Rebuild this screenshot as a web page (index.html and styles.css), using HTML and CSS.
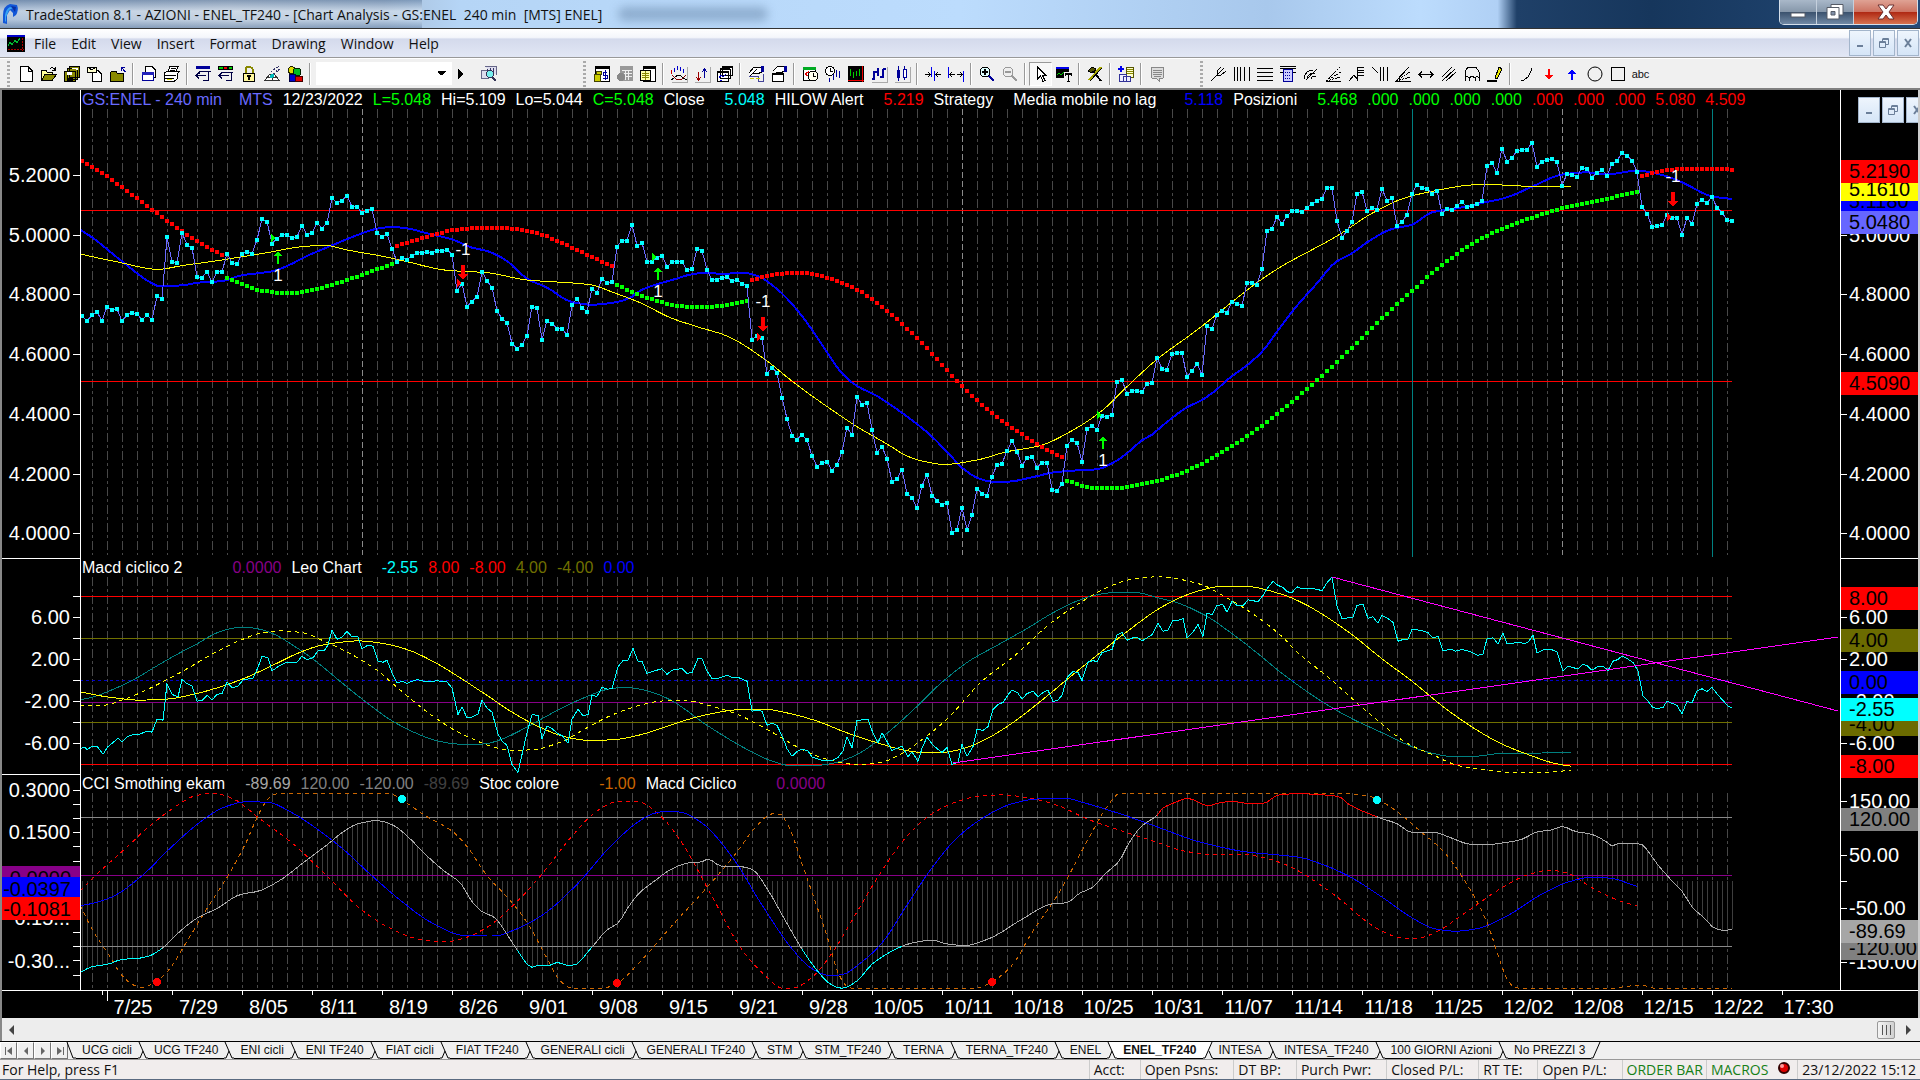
FILE: index.html
```html
<!DOCTYPE html>
<html lang="en">
	<head>
		<meta charset="UTF-8">
		<title>TradeStation 8.1 - AZIONI - ENEL_TF240</title>
		<link rel="stylesheet" href="styles.css">
	</head>
	<body>
		<header class="titlebar">
			<svg class="logo" viewBox="0 0 18 22"><path d="M2 20V12Q2 3 9 1L16 2Q18 7 15 12L12 14V10L9 7L6 12V21Z" fill="#1257d8"/><path d="M4 18V12Q5 6 9 4L12 5L8 7L5 14V19Z" fill="#37a5f5"/><path d="M10 3L15 4L14 9Z" fill="#0a2fa0"/></svg>
			<h1 class="title">TradeStation 8.1 - AZIONI - ENEL_TF240 - [Chart Analysis - GS:ENEL&nbsp; 240 min&nbsp; [MTS] ENEL]</h1>
			<span class="ghost"></span>
			<div class="win_buttons">
				<button class="win" aria-label="Minimize"><svg width="16" height="14"><rect x="1" y="8" width="14" height="4" fill="#fff" stroke="#555b66"/></svg></button>
				<button class="win" aria-label="Restore"><svg width="18" height="18"><path d="M5 1.5H17V12H5Z" fill="#fff" stroke="#555b66"/><path d="M1 4.5H13V16H1Z" fill="#fff" stroke="#555b66"/><path d="M5 8.5H9V12H5Z" fill="#8090a8" stroke="#555b66"/></svg></button>
				<button class="win win--close" aria-label="Close"><svg width="18" height="16"><path d="M1 1H6L9 5L12 1H17L12 8L17 15H12L9 11L6 15H1L6 8Z" fill="#fff" stroke="#6a3030"/></svg></button>
			</div>
		</header>

		<nav class="menubar">
			<svg class="menu_icon" viewBox="0 0 18 17"><path d="M0 0H18V17H0Z" fill="#000"/><path d="M0 0H18V2H0Z" fill="#00c"/><path d="M1 11L3 7L5 10L8 5L10 8L13 3" fill="none" stroke="#0b3"/><path d="M1 14H17M15 3V16" stroke="#a00" stroke-dasharray="2 1"/></svg>
			<a href="#">File</a><a href="#">Edit</a><a href="#">View</a><a href="#">Insert</a><a href="#">Format</a><a href="#">Drawing</a><a href="#">Window</a><a href="#">Help</a>
			<div class="mdi">
				<button aria-label="Minimize chart"><svg viewBox="0 0 10 10"><path d="M2 7H8V9H2Z" fill="#6b7f99"/></svg></button>
				<button aria-label="Restore chart"><svg viewBox="0 0 10 10"><path d="M3.5 .5H9.5V6.5H7M3.5 1.5H9.5M3.5 1V3M.5 3.5H6.5V9.5H.5ZM.5 4.5H6.5" fill="none" stroke="#6b7f99"/></svg></button>
				<button aria-label="Close chart"><svg viewBox="0 0 10 10"><path d="M2 1L8 9M8 1L2 9" stroke="#6b7f99" stroke-width="2"/></svg></button>
			</div>
		</nav>

		<div class="toolbar">
			<div class="tools">
				<span class="grip"></span>
				<button aria-label="New"><svg><path d="M2.5 .5H10L14.5 5V15.5H2.5ZM10 .5V5H14.5" fill="#fff" stroke="#000"/></svg></button>
				<button aria-label="Open"><svg><path d="M.5 14.5V4.5H5L6 6H11V8" fill="#ff9" stroke="#000"/><path d="M.5 14.5L4 8.5H15.5L11 14.5Z" fill="#8a8a00" stroke="#000"/><path d="M9 3Q12 0 14 4M14.5 1V4.5H11" fill="none" stroke="#000"/></svg></button>
				<button aria-label="Save all"><svg><path d="M5.5 .5H15.5V11H5.5ZM3 2.5H13V13H3ZM.5 5.5H11V15.5H.5Z" fill="#8a8a00" stroke="#000"/><path d="M3 6H8V9H3ZM6 2H14V4" fill="#fff"/><path d="M3 12H9V15H3Z" fill="#000"/></svg></button>
				<button aria-label="Import"><svg><path d="M5.5 4.5H11L14.5 8V15.5H5.5Z" fill="#fff" stroke="#000"/><path d="M.5 1H9V6.5H.5ZM.5 1L5 4L9 1" fill="#ffc" stroke="#000"/></svg></button>
				<button aria-label="Workspace"><svg><path d="M.5 15.5V6.5L2 5H6L7 7H13.5V15.5Z" fill="#8a8a00" stroke="#000"/><path d="M15.5 6L11 1M11 5V1H15" fill="none" stroke="#009"/></svg></button>
				<span class="sep"></span>
				<button aria-label="Preview"><svg><path d="M4.5 .5H11L14.5 4V11H4.5Z" fill="#fff" stroke="#000"/><path d="M1.5 6.5H12.5V14.5H1.5Z" fill="#fff" stroke="#009"/><path d="M1 6H13V9H1Z" fill="#22b"/></svg></button>
				<button aria-label="Print"><svg><path d="M4 6L6 .5H14L12 6M.5 7L3 5.5H15L13 8.5V13L10 15.5H.5Z" fill="#fff" stroke="#000"/><path d="M1 9.5H12M1 12.5H10M7 2.5H12M6 4.5H11" stroke="#000"/><path d="M3 13H8V14H3Z" fill="#dd0"/></svg></button>
				<span class="sep"></span>
				<button aria-label="Insert bar"><svg><path d="M1 0H15V3H1Z" fill="#009"/><path d="M4.5 5.5H15.5M8 14.5H13.5V6M4.5 5V8M1 9.5H11M4 6.5L1 9.5L4 12.5" fill="none" stroke="#004"/></svg></button>
				<button aria-label="Insert study"><svg><path d="M0 0H15V4H0Z" fill="#000"/><path d="M1 1H5V3H1Z" fill="#0c0"/><path d="M6 1H9V3H6Z" fill="#e00"/><path d="M11 1H14V3H11Z" fill="#0c0"/><path d="M8 14.5H13.5V6M4 6.5H15M1 9.5H11M4 6.5L1 9.5L4 12.5" fill="none" stroke="#004"/></svg></button>
				<button aria-label="Lock"><svg><path d="M4.5 8V3Q8 -2 11.5 3V8" fill="none" stroke="#880" stroke-width="2"/><path d="M2.5 7.5H13.5V15.5H2.5Z" fill="#fff79c" stroke="#000"/><path d="M6 9H10V11H9V14H7V11H6Z" fill="#000"/></svg></button>
				<button aria-label="Satellite"><svg><path d="M1 14L6 8L10 8L15 14ZM8 8V14M4 11H12" fill="#fff" stroke="#333"/><path d="M7 6L15 0M9 8L16 3M10 2L14 6" stroke="#336" stroke-dasharray="2 1"/><circle cx="8" cy="10" r="2" fill="#0bb"/></svg></button>
				<button aria-label="Shapes"><svg><path d="M1 3L4 0L8 2V6L4 8L1 6Z" fill="#dd0" stroke="#220"/><circle cx="10" cy="6" r="4" fill="#0b2" stroke="#020"/><path d="M2 8H8V15H2Z" fill="#00c" stroke="#004"/><path d="M8 10H15V15H8Z" fill="#d00" stroke="#400"/></svg></button>
				<span class="sep"></span>
				<select class="symbol" aria-label="Symbol"><option></option></select>
				<button class="go" aria-label="Go"><svg><path d="M5 3L10 8L5 13Z"/></svg></button>
				<button aria-label="Find symbol"><svg><path d="M3.5 .5H15.5V9M.5 4.5H7V12.5H.5Z" fill="#dde" stroke="#668"/><path d="M6 3V8M9 2V4M12 2V6" stroke="#336"/><circle cx="9" cy="8" r="3.5" fill="#7ee" stroke="#335"/><path d="M11 11L15 15" stroke="#335" stroke-width="2"/></svg></button>
			</div>

			<div class="tools">
				<span class="grip"></span>
				<button aria-label="Quotes"><svg><path d="M1.5 1.5H15.5V15.5H1.5Z" fill="#fff" stroke="#000"/><path d="M1 0H16V3H1Z" fill="#000"/><path d="M0 8H6V15H0ZM2 5H7V8H2Z" fill="#cc0" stroke="#440"/><path d="M13 6H9V9H13V12H9M11 4V14" fill="none" stroke="#009"/></svg></button>
				<button aria-label="Table" disabled><svg><path d="M3 0H16V15H6V8H3Z" fill="#999"/><path d="M5 4.5H15M7 7.5H15M8 10.5H15M8.5 4V14M11.5 4V14" stroke="#eee"/><circle cx="4" cy="11" r="4" fill="#888"/></svg></button>
				<button aria-label="Radar"><svg><path d="M3.5 1.5H15.5V15.5H3.5Z" fill="#fff" stroke="#000"/><path d="M3 0H16V3H3Z" fill="#000"/><path d="M.5 4.5H10V14.5H.5Z" fill="#ffa" stroke="#000"/><path d="M2 7.5H9M2 9.5H9M2 11.5H9M5.5 5V14" stroke="#880"/></svg></button>
				<span class="sep"></span>
				<button aria-label="Indicator"><svg class="raised"><path d="M.5 8V4" stroke="#c00"/><path d="M3.5 6V2M6.5 4V0M9.5 5V1M12.5 7V3" stroke="#00c"/><path d="M0 14L3 12L7 9H9L12 12L16 14" fill="none" stroke="#000"/><path d="M1 9L5 13H11L15 9" fill="none" stroke="#800"/></svg></button>
				<button aria-label="Show me"><svg class="raised"><path d="M4.5 6V13M2 11L4.5 14L7 11" fill="none" stroke="#900"/><path d="M10.5 12V3M8 6L10.5 3L13 6" fill="none" stroke="#009"/></svg></button>
				<button aria-label="Windows"><svg><path d="M5.5 .5H15.5V9H5.5ZM3 3H13V12H3ZM.5 5.5H11V15.5H.5Z" fill="#fff" stroke="#000"/><path d="M5 1H16M3 3H13M1 6H11" stroke="#000" stroke-width="2"/><path d="M2 12L4 9L6 11L9 8M3 14H5" fill="none" stroke="#00c"/></svg></button>
				<span class="sep"></span>
				<button aria-label="Format"><svg><path d="M1 7L6 1H13L14 6L9 8L5 7L2 10M4 8L9 3" fill="#fff" stroke="#000"/><path d="M13 0H16V6H13Z" fill="#009"/><path d="M1 10H10V15H15V8" fill="none" stroke="#449"/><path d="M2 12H6V13H2ZM8 12H12V13H8Z" fill="#cc0"/></svg></button>
				<button aria-label="Format window"><svg><path d="M1.5 7.5H12V15.5H1.5Z" fill="#fff" stroke="#000"/><path d="M1 7H12V9H1Z"/><path d="M2 5L7 0H13L14 5L9 7L5 6" fill="#fff" stroke="#000"/><path d="M13 0H16V6H13Z" fill="#009"/></svg></button>
				<span class="sep"></span>
				<button aria-label="Calendar"><svg><path d="M1 3H13V14H1Z" fill="#fff" stroke="#000"/><path d="M1 1H14V4H1Z" fill="#0a2"/><path d="M3 8L6 6L6 10Z" fill="#fff" stroke="#d00"/><circle cx="11" cy="10" r="5" fill="#ffe" stroke="#000"/><path d="M11 7V10H14" fill="none" stroke="#000"/></svg></button>
				<button aria-label="Interval"><svg><circle cx="5" cy="5" r="4.5" fill="#fff" stroke="#000"/><path d="M5 2V6L8 5" fill="none" stroke="#000"/><path d="M4.5 12V16M8.5 8V14M11.5 4V11M14.5 5V12" stroke="#009"/></svg></button>
				<button aria-label="Background"><svg><path d="M0 0H16V16H0Z"/><path d="M2.5 3V10M5.5 6V12M8.5 5V10M11.5 3V10" stroke="#0c0"/><path d="M14.5 0V16M0 14.5H16" stroke="#e00"/></svg></button>
				<button aria-label="Bars"><svg class="raised"><path d="M3 5V14M1 13H3M3 6H7M7 2V10M12 3V12M9 11H12M12 3H15" stroke="#009" stroke-width="2"/></svg></button>
				<button aria-label="Candles"><svg class="raised"><path d="M4.5 0V15" stroke="#009"/><path d="M3 4H6V12H3Z" fill="#009"/><path d="M10.5 0V14" stroke="#009"/><path d="M9 3H12V11H9Z" fill="#fff" stroke="#009"/></svg></button>
				<span class="sep"></span>
				<button aria-label="Narrow"><svg><path d="M6.5 1V11M9.5 5V15" stroke="#00e"/><path d="M0 8.5H5M3 6L5 8.5L3 11M16 8.5H11M13 6L11 8.5L13 11" fill="none" stroke="#000"/></svg></button>
				<button aria-label="Widen"><svg><path d="M.5 1V12M15.5 5V16" stroke="#00e"/><path d="M2 8.5H7M4 6L2 8.5L4 11M9 8.5H14M12 6L14 8.5L12 11" fill="none" stroke="#000"/></svg></button>
				<span class="sep"></span>
				<button aria-label="Zoom in"><svg><circle cx="6" cy="6" r="5" fill="#dff" stroke="#000"/><path d="M6 3V9M3 6H9" stroke="#000" stroke-width="2"/><path d="M10 10L15 15" stroke="#009" stroke-width="2"/></svg></button>
				<button aria-label="Zoom out" disabled><svg><circle cx="6" cy="6" r="5" fill="#eee" stroke="#999"/><path d="M3 6H9" stroke="#999" stroke-width="2"/><path d="M10 10L15 15" stroke="#999" stroke-width="2"/></svg></button>
				<span class="sep"></span>
				<button class="pressed" aria-label="Pointer"><svg><path d="M4.5 1V13L7.5 10L10 15.5L12 14.5L9.5 9.5H13Z" fill="#fff" stroke="#000"/></svg></button>
				<button aria-label="Text window"><svg><path d="M0 1H13V12H0Z"/><path d="M0 1H13V3H0Z" fill="#00e"/><path d="M1 9L3 7L5 9L8 6" fill="none" stroke="#0c0"/><path d="M8 6H16V16H8Z" fill="#f0f0f0"/><path d="M9 7H16V10H15V9H13V15H14V16H11V15H12V9H10V10H9Z"/></svg></button>
				<span class="sep"></span>
				<button aria-label="Tools"><svg><path d="M1 5L5 1L9 3L7 6L3 6Z" fill="#550" stroke="#000"/><path d="M6 5L14 15" stroke="#000" stroke-width="2"/><path d="M14 1L2 14" stroke="#aa0" stroke-width="2"/><path d="M15 2L3 15" stroke="#000"/></svg></button>
				<span class="sep"></span>
				<button aria-label="Add"><svg><path d="M8 1H15V11H8Z" fill="#ffc" stroke="#550"/><path d="M9 3.5H15M9 5.5H15M9 7.5H15" stroke="#880"/><path d="M3 0V6M0 3H6" stroke="#00e" stroke-width="2"/><path d="M1.5 8.5H8V15.5H1.5ZM5 10.5H12V15.5H5Z" fill="#eef" stroke="#339"/></svg></button>
				<span class="sep"></span>
				<button aria-label="Message" disabled><svg><path d="M2 1H15L14 12H10V15L7 12H3Z" fill="#ddd" stroke="#888"/><path d="M4 4.5H13M4 6.5H13M4 8.5H13M5 10.5H12" stroke="#888"/></svg></button>
			</div>

			<div class="tools">
				<span class="grip"></span>
				<button aria-label="Pitchfork"><svg><path d="M0 15L6 9M10 1L6 5V9H10L15 5M7 8L13 2" fill="none" stroke="#000"/></svg></button>
				<button aria-label="Vertical lines"><svg><path d="M.5 1V15M3.5 1V15M6.5 1V15M10.5 1V15M15.5 1V15" stroke="#000"/></svg></button>
				<button aria-label="Horizontal lines"><svg><path d="M0 2.5H16M0 6.5H16M0 10.5H16M0 14.5H16" stroke="#000"/></svg></button>
				<button aria-label="Calculator"><svg><path d="M0 .5H16M0 2.5H16M0 6.5H16" stroke="#000"/><path d="M3.5 3.5H12.5V15.5H3.5Z" fill="#ccf" stroke="#009"/><path d="M5 6H11M5 9.5H11M5 12.5H11" stroke="#009" stroke-dasharray="1 1"/></svg></button>
				<button aria-label="Arcs"><svg><path d="M1 13Q2 4 10 4M4 13Q5 7 12 7M8 13Q8 10 13 11M3 14L14 3" fill="none" stroke="#000"/></svg></button>
				<button aria-label="Fan"><svg><path d="M0 15.5H15" stroke="#000"/><path d="M0 15L14 1M0 15L15 6M0 15L15 11" stroke="#000" stroke-dasharray="2 1"/></svg></button>
				<button aria-label="Extension"><svg><path d="M0 15L5 9L8 13V1M8 1.5H15M8 4.5H15M8 6.5H15M8 9.5H15" fill="none" stroke="#000"/></svg></button>
				<button aria-label="Time lines"><svg><path d="M0 1L6 7M8.5 1V15M11.5 1V15M15.5 1V15" fill="none" stroke="#000"/></svg></button>
				<button aria-label="Speed lines"><svg><path d="M0 15.5H16M1 15L14 1" stroke="#000"/><path d="M1 15L15 6M1 15L15 11" stroke="#000" stroke-dasharray="2 1"/></svg></button>
				<button aria-label="Horizontal"><svg><path d="M1 8.5H15M4 5.5L1 8.5L4 11.5M12 5.5L15 8.5L12 11.5" fill="none" stroke="#000"/></svg></button>
				<button aria-label="Channel"><svg><path d="M1 11L11 1M1 15L14 3M5 15L15 6" stroke="#000"/></svg></button>
				<button aria-label="Cycle"><svg><path d="M1 12V6L4 1H12L15 6V12M1 15V12L3 10L5 12L8 10L11 12L13 10L15 12V15M5 15V12M11 15V12" fill="none" stroke="#000"/></svg></button>
				<button aria-label="Pencil"><svg><path d="M0 14.5H10" stroke="#000" stroke-width="2"/><path d="M8 12L12 1L15 3L10 13Z" fill="#ee0" stroke="#000"/></svg></button>
				<span class="sep"></span>
				<button aria-label="Arc"><svg><path d="M13 2V5L10 11L6 14H3" fill="none" stroke="#000"/></svg></button>
				<button aria-label="Down arrow"><svg><path d="M7 3H9V9H12L8 14L4 9H7Z" fill="#f00"/></svg></button>
				<button aria-label="Up arrow"><svg><path d="M7 14H9V8H12L8 3L4 8H7Z" fill="#00f"/></svg></button>
				<button aria-label="Ellipse"><svg class="smooth"><circle cx="8" cy="8" r="7" fill="none" stroke="#000"/></svg></button>
				<button aria-label="Rectangle"><svg><path d="M1.5 1.5H14.5V14.5H1.5Z" fill="none" stroke="#000"/></svg></button>
				<button class="abc">abc</button>
			</div>
		</div>

		<main class="chart">
			<svg class="plot" viewBox="0 90 1920 928" preserveAspectRatio="none" role="img" aria-label="ENEL 240 min chart"></svg>
			<div class="panes">
				<div class="legend">
					<span class="quote">GS:ENEL - 240 min</span><span class="quote before-s">MTS</span><span>12/23/2022</span><span class="up">L=5.048</span><span>Hi=5.109</span><span>Lo=5.044</span><span class="up">C=5.048</span><span>Close</span><span class="cyan before-m">5.048</span><span>HILOW Alert</span><span class="red before-m">5.219</span><span>Strategy</span><span class="before-m">Media mobile no lag</span><span class="blue before-l">5.118</span><span>Posizioni</span><span class="up before-m">5.468</span><span class="up">.000</span><span class="up">.000</span><span class="up">.000</span><span class="up">.000</span><span class="red">.000</span><span class="red">.000</span><span class="red">.000</span><span class="red">5.080</span><span class="red">4.509</span>
				</div>
				<div class="legend">
					<span>Macd ciclico 2</span><span class="purple before-xxl">0.0000</span><span>Leo Chart</span><span class="cyan before-m">-2.55</span><span class="red">8.00</span><span class="red">-8.00</span><span class="olive">4.00</span><span class="olive">-4.00</span><span class="blue">0.00</span>
				</div>
				<div class="legend">
					<span>CCI Smothing ekam</span><span class="silver before-m">-89.69</span><span class="gray">120.00</span><span class="gray">-120.00</span><span class="dark">-89.69</span><span>Stoc colore</span><span class="orange before-xl">-1.00</span><span>Macd Ciclico</span><span class="purple before-xl">0.0000</span>
				</div>
			</div>
			<div class="mdi mdi--float">
				<button aria-label="Minimize window"><svg viewBox="0 0 10 10"><path d="M2 7H8V9H2Z" fill="#6b7f99"/></svg></button>
				<button aria-label="Restore window"><svg viewBox="0 0 10 10"><path d="M3.5 .5H9.5V6.5H7M3.5 1.5H9.5M3.5 1V3M.5 3.5H6.5V9.5H.5ZM.5 4.5H6.5" fill="none" stroke="#6b7f99"/></svg></button>
				<button aria-label="Close window"><svg viewBox="0 0 10 10"><path d="M2 1L8 9M8 1L2 9" stroke="#6b7f99" stroke-width="2"/></svg></button>
			</div>
		</main>

		<div class="scrollbar">
			<button aria-label="Scroll left"><svg viewBox="0 0 6 10"><path d="M5 0V10L0 5Z" fill="#444"/></svg></button>
			<button class="thumb" aria-label="Scroll position"><svg viewBox="0 0 10 10"><path d="M1.5 0V10M5.5 0V10M9.5 0V10" stroke="#555"/></svg></button>
			<button aria-label="Scroll right"><svg viewBox="0 0 6 10"><path d="M1 0V10L6 5Z" fill="#444"/></svg></button>
		</div>

		<div class="tabbar">
			<button class="step" aria-label="First tab"><svg viewBox="0 0 10 10"><path d="M1 1H2V9H1ZM8 1V9L3 5Z"/></svg></button>
			<button class="step" aria-label="Previous tab"><svg viewBox="0 0 10 10"><path d="M7 1V9L3 5Z"/></svg></button>
			<button class="step" aria-label="Next tab"><svg viewBox="0 0 10 10"><path d="M3 1V9L7 5Z"/></svg></button>
			<button class="step" aria-label="Last tab"><svg viewBox="0 0 10 10"><path d="M8 1H9V9H8ZM2 1V9L7 5Z"/></svg></button>
			<div class="tabs"></div>
		</div>

		<footer class="status">
			<span class="help">For Help, press F1</span>
			<span class="cell">Acct:</span><span class="cell">Open Psns:</span><span class="cell">DT BP:</span><span class="cell">Purch Pwr:</span><span class="cell">Closed P/L:</span><span class="cell">RT TE:</span><span class="cell">Open P/L:</span>
			<span class="cell cell--on">ORDER BAR</span><span class="cell cell--on">MACROS</span>
			<svg class="lamp" viewBox="0 0 14 14"><circle cx="7" cy="7" r="5" fill="#d00" stroke="#300" stroke-width="2"/><circle cx="5" cy="5" r="2" fill="#f99"/></svg>
			<span class="cell cell--clock">23/12/2022 15:12</span>
		</footer>

		<script>
			// every bar is 5 wide, the first one stands at 82
			var BAR = 5, FIRST = 82, LAST = 1732;

			// closes, in thirds below the top of the price pane
			var closes = [
				648,663,645,635,663,620,630,627,663,645,638,641,660,645,660,588,597,412,485,489,
				398,434,443,530,533,515,546,515,515,461,488,491,461,455,461,419,358,365,431,416,
				404,404,413,410,377,404,398,368,386,368,293,308,302,287,320,321,338,332,326,398,
				410,401,446,485,473,479,467,458,460,456,458,452,453,449,464,572,551,620,605,590,
				515,542,563,632,656,668,731,746,734,707,620,623,719,662,671,686,687,704,614,596,
				623,635,566,578,536,548,545,440,422,422,374,437,428,485,485,473,467,500,486,485,
				486,509,506,446,452,509,539,539,534,530,543,539,551,558,719,707,713,821,803,818,
				893,956,1007,1019,1004,1020,1067,1100,1088,1085,1112,1094,1055,983,1004,890,914,909,989,1058,
				1040,1076,1145,1136,1109,1181,1193,1223,1157,1124,1187,1202,1214,1209,1298,1289,1223,1289,1244,1166,
				1181,1187,1130,1094,1091,1052,1022,1055,1097,1073,1070,1103,1088,1088,1169,1172,1151,1037,1019,1028,
				1085,986,977,989,947,950,944,845,840,881,872,872,875,851,848,773,806,809,761,758,
				758,832,812,791,824,677,686,644,632,638,605,611,617,548,549,554,506,392,386,350,
				371,347,333,332,335,323,311,302,296,263,264,362,413,392,365,281,275,332,323,329,
				266,302,293,377,365,344,281,254,263,266,281,272,341,326,329,317,305,320,317,311,
				302,197,188,218,146,185,173,153,149,149,128,200,185,179,176,185,257,221,224,230,
				203,206,233,218,209,227,191,182,158,167,182,215,320,341,380,377,375,344,353,353,
				404,353,371,311,299,308,291,323,338,359,363
			];

			// studies: x, y pairs
			var media = [80,389,92,412,122,484,152,550,159,558,182,556,198,548,222,543,242,526,272,514,287,498,307,468,332,436,362,400,377,386,392,381,407,385,427,400,452,418,472,443,487,453,507,483,527,536,547,563,572,606,592,614,617,606,632,590,640,572,657,553,672,540,692,523,707,518,722,522,742,518,757,527,777,567,792,612,807,668,827,757,842,820,856,856,877,888,897,928,917,972,932,1010,952,1072,962,1103,977,1133,992,1145,1007,1145,1032,1132,1052,1118,1072,1112,1097,1108,1112,1090,1127,1060,1142,1021,1152,1004,1162,978,1187,922,1202,900,1217,868,1227,840,1247,796,1262,755,1280,683,1297,617,1317,550,1335,488,1352,460,1367,427,1392,387,1412,374,1432,337,1457,325,1482,309,1507,292,1532,260,1562,224,1587,217,1607,223,1637,212,1662,225,1682,247,1712,289,1732,297];
			var slow = [80,462,119,487,158,508,182,497,222,480,267,458,302,440,325,436,347,450,381,468,407,485,447,511,487,518,527,540,577,550,592,555,612,576,640,608,672,655,697,680,727,708,762,772,797,855,832,930,857,980,887,1032,907,1068,922,1083,944,1093,977,1080,1007,1055,1040,1037,1072,992,1102,932,1127,860,1157,778,1197,690,1232,606,1257,548,1280,502,1337,408,1372,340,1402,297,1432,274,1478,254,1512,256,1532,260,1571,260];
			var stops = [
				['#f00', [82,184,97,209,122,262,152,329,177,384,197,424,222,465]],
				['#0f0', [227,533,242,553,262,572,287,580,302,576,332,554,362,525,392,491]],
				['#f00', [397,438,427,410,457,389,477,384,507,385,537,400,572,443,602,485,612,497]],
				['#0f0', [617,554,637,582,657,602,677,617,697,621,722,618,747,603]],
				['#f00', [752,539,782,521,802,518,827,533,857,569,887,632,922,730,962,858,992,940,1022,1003,1042,1041,1062,1071]],
				['#0f0', [1067,1142,1092,1163,1117,1164,1147,1150,1182,1118,1217,1066,1257,988,1282,930,1332,800,1382,655,1412,573,1442,495,1482,415,1532,353,1567,321,1602,299,1637,276]],
				['#f00', [1642,228,1662,213,1687,207,1712,207,1732,209]]
			];

			var leo = [80,605,85,603,87,608,92,600,97,599,103,622,108,600,118,576,122,587,128,570,133,565,138,566,147,555,152,558,157,520,163,523,167,417,172,448,178,456,182,405,187,417,192,423,197,468,202,466,207,451,212,465,217,448,222,446,227,413,232,429,238,425,243,406,253,401,258,370,262,337,268,342,272,380,280,364,287,355,297,355,302,337,307,348,313,342,318,322,324,322,328,305,332,262,337,288,342,282,347,265,352,281,358,281,362,315,367,307,373,308,378,352,383,355,387,349,392,385,397,415,402,410,407,416,417,405,427,412,437,409,447,412,452,430,458,507,462,484,467,517,473,513,478,505,482,465,487,488,492,500,498,563,502,583,507,597,512,652,518,675,523,610,527,560,532,507,538,509,542,578,547,540,552,547,557,561,563,570,568,590,572,520,578,492,583,510,588,507,592,452,597,454,602,428,607,433,612,432,618,368,623,350,628,349,633,315,638,352,642,352,647,388,652,382,662,374,667,390,672,378,682,373,687,387,692,385,698,344,702,345,707,381,712,402,718,402,727,393,733,400,738,399,743,405,747,410,752,497,758,495,762,497,767,538,772,531,777,538,783,575,787,606,792,628,797,614,802,607,808,613,812,630,822,640,832,640,838,632,843,612,847,572,852,603,857,524,868,521,873,561,878,590,882,560,892,611,902,599,908,630,912,615,918,643,922,605,927,572,933,596,942,617,947,602,952,652,958,645,962,594,967,628,973,600,977,550,983,553,988,542,993,492,998,477,1003,472,1008,450,1012,435,1018,445,1022,462,1027,446,1033,439,1038,455,1043,443,1048,436,1053,469,1058,465,1062,451,1067,400,1073,382,1078,385,1082,408,1088,355,1093,350,1097,354,1102,327,1112,318,1117,275,1122,269,1127,291,1133,284,1138,284,1142,293,1152,275,1158,242,1163,265,1168,261,1173,233,1178,234,1183,228,1187,284,1193,267,1198,245,1203,280,1207,212,1212,217,1217,190,1223,188,1227,210,1232,178,1237,190,1243,191,1248,174,1258,179,1263,161,1268,138,1273,120,1278,132,1283,137,1287,150,1292,153,1297,136,1302,142,1312,140,1322,147,1327,124,1332,108,1337,192,1342,228,1353,225,1357,190,1363,187,1368,227,1373,223,1378,242,1382,219,1388,228,1393,239,1398,294,1403,289,1408,288,1412,259,1420,262,1428,269,1433,285,1438,280,1443,321,1452,318,1455,323,1462,318,1470,324,1478,335,1483,331,1487,287,1493,284,1498,302,1503,270,1507,301,1518,298,1525,300,1528,297,1533,276,1537,328,1545,317,1552,319,1557,325,1563,381,1568,366,1578,375,1583,361,1587,365,1592,378,1597,369,1603,366,1608,379,1613,352,1618,347,1622,337,1628,346,1633,356,1638,380,1643,454,1648,468,1653,487,1658,489,1663,486,1667,468,1677,480,1682,505,1687,468,1692,473,1697,438,1702,432,1707,440,1712,428,1718,450,1728,482,1732,487];
			var teal = [80,464,93,456,108,440,134,405,152,374,174,337,198,300,215,272,228,259,243,253,258,258,272,271,302,323,318,357,342,415,367,473,392,525,420,566,437,583,455,592,468,594,485,592,503,577,527,543,554,500,585,457,610,432,625,428,640,433,655,445,672,467,707,538,747,608,775,645,790,655,818,654,835,647,857,623,882,573,912,497,942,413,970,350,997,306,1027,257,1052,213,1077,177,1097,159,1117,152,1137,153,1157,167,1177,182,1207,222,1232,272,1257,328,1280,383,1302,430,1328,480,1352,519,1380,557,1412,600,1432,619,1450,628,1475,628,1500,620,1530,619,1571,617];
			var macd = [80,441,108,456,140,465,167,462,192,449,212,434,243,403,267,372,297,330,318,308,338,298,358,293,382,300,407,318,437,359,460,400,490,457,512,500,541,545,567,573,590,582,613,580,640,566,662,546,687,522,712,504,738,493,765,492,790,504,817,526,847,560,882,593,907,612,922,617,945,616,965,604,985,580,1012,532,1042,465,1072,393,1102,323,1132,255,1157,203,1182,165,1202,145,1224,134,1247,135,1280,156,1302,182,1322,215,1352,275,1382,345,1412,410,1444,486,1472,543,1500,590,1530,625,1555,649,1571,657];
			var signal = [80,480,103,480,122,465,143,440,164,410,187,374,213,330,243,288,262,270,282,264,302,269,322,291,347,325,377,378,392,415,422,488,452,548,472,577,490,598,512,611,532,609,560,588,587,545,613,507,640,480,655,470,672,466,690,468,712,483,737,506,767,550,802,608,827,637,857,652,882,645,902,620,922,580,947,520,982,410,1015,335,1050,243,1087,170,1107,138,1130,115,1157,107,1177,113,1202,130,1225,165,1247,203,1280,275,1297,325,1330,403,1358,476,1380,530,1407,590,1432,623,1457,654,1482,667,1512,675,1540,675,1571,669];

			var cci = [80,1256,92,1239,108,1232,122,1218,138,1215,150,1207,165,1179,175,1150,197,1098,217,1070,240,1030,258,1020,280,988,302,940,328,883,342,850,357,825,377,815,393,828,408,862,425,912,445,963,460,995,472,1050,483,1081,494,1095,507,1145,517,1190,532,1241,537,1236,548,1237,558,1226,566,1235,573,1235,592,1182,608,1130,618,1113,628,1067,640,1023,652,996,672,955,690,937,700,936,708,927,722,948,738,948,752,956,767,1012,782,1088,802,1188,817,1250,830,1289,842,1302,857,1280,872,1232,890,1197,910,1172,932,1162,947,1173,967,1178,975,1172,992,1154,1020,1105,1052,1057,1067,1053,1080,1025,1092,1010,1105,970,1119,933,1130,875,1142,830,1157,800,1163,778,1177,760,1187,750,1198,760,1207,772,1220,763,1232,759,1248,765,1262,766,1280,739,1300,737,1322,740,1339,745,1348,766,1360,784,1378,805,1397,824,1412,849,1434,849,1450,864,1472,884,1490,884,1502,880,1520,871,1538,847,1552,842,1562,832,1575,846,1592,855,1605,874,1613,889,1618,882,1640,882,1645,893,1657,940,1672,990,1682,1020,1692,1065,1705,1100,1715,1128,1725,1134,1732,1130];
			var cycle = [80,1062,93,1055,113,1035,140,980,172,890,202,815,225,775,247,760,268,762,292,792,315,835,342,895,370,970,402,1050,432,1112,465,1149,495,1150,512,1135,542,1090,577,1000,612,885,640,815,655,793,667,787,680,790,702,822,732,920,762,1060,792,1187,812,1245,830,1265,842,1262,862,1225,882,1170,907,1060,930,960,957,865,987,800,1012,766,1037,752,1065,750,1085,764,1122,797,1157,833,1200,877,1247,906,1280,915,1300,922,1325,945,1348,975,1382,1037,1412,1097,1435,1129,1455,1136,1475,1130,1505,1095,1542,1028,1572,990,1592,979,1610,982,1637,1006];
			var lead = [80,1020,97,970,122,905,150,830,175,775,193,745,212,735,232,750,260,810,292,880,325,970,362,1075,392,1130,420,1160,445,1167,462,1158,487,1125,517,1050,542,970,572,860,597,787,617,760,638,760,660,800,682,880,712,1035,742,1190,767,1270,782,1302,792,1302,812,1270,832,1200,857,1080,882,960,907,860,932,795,957,760,977,745,1002,740,1030,750,1057,770,1087,810,1127,850,1152,873,1187,905,1212,913,1240,912,1260,920,1285,942,1302,967,1327,1015,1345,1055,1365,1105,1385,1140,1400,1155,1417,1157,1435,1140,1465,1083,1502,1010,1530,970,1550,959,1567,967,1592,1010,1617,1045,1637,1063];
			var stoc = [80,1060,82,1072,92,1130,110,1210,122,1265,133,1292,143,1300,152,1290,167,1255,187,1165,207,1070,227,980,245,885,258,800,267,755,275,737,390,737,402,755,425,800,452,845,467,890,487,975,505,1030,527,1110,547,1215,560,1280,572,1302,602,1302,618,1285,640,1225,672,1120,702,1025,732,925,757,830,772,795,780,795,790,840,802,940,827,1150,840,1270,850,1302,975,1302,992,1283,1012,1235,1032,1140,1060,1020,1087,875,1107,775,1119,737,1345,737,1370,745,1385,765,1400,795,1420,845,1442,900,1467,1000,1487,1110,1502,1240,1510,1290,1520,1302,1612,1302,1627,1296,1642,1293,1655,1302,1732,1302];

			var price = function(v){ return 100 + v / 3; };
			var lower = function(v){ return 540 + v / 2.904; };

			var svg = document.querySelector('.plot');

			var add = function(tag, attrs, text){
				var el = document.createElementNS('http://www.w3.org/2000/svg', tag);
				for (var name in attrs) el.setAttribute(name, attrs[name]);
				if (text) el.textContent = text;
				svg.appendChild(el);
				return el;
			};

			var line = function(x1, y1, x2, y2, color, dash){
				add('path', {d: 'M' + x1 + ' ' + y1 + 'L' + x2 + ' ' + y2, stroke: color, 'stroke-dasharray': dash || 'none'});
			};

			var split = function(flat){
				var out = [];
				for (var i = 0; i < flat.length; i += 2) out.push([flat[i], flat[i + 1]]);
				return out;
			};

			// monotone cubic through the points, one sample per bar
			var smooth = function(flat){
				var p = split(flat), n = p.length, slope = [], tan = [], out = [], i;
				for (i = 0; i < n - 1; i++) slope.push((p[i + 1][1] - p[i][1]) / (p[i + 1][0] - p[i][0]));
				for (i = 0; i < n; i++) {
					var a = slope[Math.max(i - 1, 0)], b = slope[Math.min(i, n - 2)];
					tan.push(a * b <= 0 ? 0 : 2 * a * b / (a + b));
				}
				i = 0;
				for (var x = p[0][0]; x <= p[n - 1][0]; x += (x == 80 ? 2 : BAR)) {
					while (i < n - 2 && x > p[i + 1][0]) i++;
					var h = p[i + 1][0] - p[i][0], t = (x - p[i][0]) / h, t2 = t * t, t3 = t2 * t;
					out.push([x, (2 * t3 - 3 * t2 + 1) * p[i][1] + (t3 - 2 * t2 + t) * h * tan[i] + (3 * t2 - 2 * t3) * p[i + 1][1] + (t3 - t2) * h * tan[i + 1]]);
				}
				if (out[out.length - 1][0] < p[n - 1][0]) out.push(p[n - 1]);
				return out;
			};

			var curve = function(points, scale, color, width, dash){
				var d = points.map(function(p){ return p[0] + ' ' + scale(p[1]).toFixed(1); }).join('L');
				add('path', {d: 'M' + d, stroke: color, 'stroke-width': width || 1, 'stroke-dasharray': dash || 'none', fill: 'none'});
			};

			var squares = function(points, color){
				var d = points.map(function(p){ return 'M' + (p[0] - 2) + ' ' + Math.round(price(p[1]) - 2) + 'h4v4h-4z'; }).join('');
				add('path', {d: d, fill: color});
			};

			// grid
			for (var i = 0; i < 110; i++) {
				var gx = 92.5 + i * 15;
				var strong = i % 40 == 18;
				[[109, 555], [577, 771], [793, 989]].forEach(function(r, pane){
					line(gx, r[0], gx, r[1], strong && pane == 0 ? '#8a8a8a' : '#484848', strong && pane == 0 ? '6 3' : '9 3 3 3');
				});
			}

			// cci histogram, under every line
			var cciBars = smooth(cci);
			cciBars.forEach(function(p){
				if (p[0] > 80) line(p[0] + .5, 881, p[0] + .5, lower(p[1]), '#3e3e3e');
			});

			line(80, 210.5, LAST, 210.5, '#f00');
			line(80, 381.5, LAST, 381.5, '#f00');
			line(1412.5, 109, 1412.5, 557, '#008080');
			line(1712.5, 109, 1712.5, 557, '#008080');
			line(80, 596.5, LAST, 596.5, '#f00');
			line(80, 764.5, LAST, 764.5, '#f00');
			line(80, 638.5, LAST, 638.5, '#707000');
			line(80, 722.5, LAST, 722.5, '#707000');
			line(80, 680.5, LAST, 680.5, '#00c', '3 3');
			line(80, 702.5, LAST, 702.5, '#808');
			line(80, 817.5, LAST, 817.5, '#888');
			line(80, 946.5, LAST, 946.5, '#888');
			line(80, 875.5, LAST, 875.5, '#808');

			curve(smooth(media), price, '#00f', 2);
			curve(smooth(slow), price, '#ff0');
			stops.forEach(function(s){ squares(smooth(s[1]), s[0]); });
			var bars = closes.map(function(v, i){ return [FIRST + i * BAR, v]; });
			curve(bars, price, '#6a6aff');
			squares(bars, '#0ff');

			curve(smooth(teal), lower, '#008080');
			curve(smooth(macd), lower, '#ff0');
			curve(smooth(signal), lower, '#ff0', 1, '4 4');
			curve(split(leo), lower, '#0ff');
			line(953, 763, 1838, 637, '#f0f');
			line(1332, 577, 1838, 711, '#f0f');

			curve(smooth(stoc), lower, '#c60', 1, '4 4');
			curve(smooth(lead), lower, '#f00', 1, '4 4');
			curve(smooth(cycle), lower, '#00f');
			// the cci line turns red above 120 and cyan below -120
			for (i = 1; i < cciBars.length; i++) {
				var v = (cciBars[i][1] + cciBars[i - 1][1]) / 2;
				curve([cciBars[i - 1], cciBars[i]], lower, v < 805 ? '#f00' : v > 1180 ? '#0ff' : '#aaa');
			}

			[[157, 982, '#f00'], [617, 983, '#f00'], [992, 982, '#f00'], [402, 799, '#0ff'], [1377, 800, '#0ff']].forEach(function(c){
				add('circle', {cx: c[0], cy: c[1], r: 4, fill: c[2]});
			});

			// strategy signals: x, top of arrow, middle of label, small marker x and y
			[[278, 251, 275, 271, 238], [658, 267, 291, 652, 257], [1103, 436, 460, 1097, 415]].forEach(function(s){
				add('path', {d: 'M' + s[0] + ' ' + s[1] + 'l4 5h-3v8h-2v-8h-3z', fill: '#0f0'});
				add('path', {d: 'M' + s[3] + ' ' + (s[4] - 4) + 'l5 4l-5 4z', fill: '#0f0'});
				add('text', {x: s[0], y: s[2] + 6, 'class': 'mark'}, '1');
			});
			[[463, 265, 249, 457, 283], [763, 317, 301, 757, 337], [1673, 192, 176, 1667, 217]].forEach(function(s){
				add('path', {d: 'M' + (s[0] - 2) + ' ' + s[1] + 'h4v9h3l-5 6l-5 -6h3z', fill: '#f00'});
				add('path', {d: 'M' + s[3] + ' ' + (s[4] - 4) + 'l5 4l-5 4z', fill: '#f00'});
				add('text', {x: s[0], y: s[2] + 6, 'class': 'mark'}, '-1');
			});

			// frame
			line(80.5, 90, 80.5, 990, '#fff');
			line(1840.5, 90, 1840.5, 990, '#fff');
			line(2, 990.5, 1918, 990.5, '#fff');
			[558.5, 774.5].forEach(function(y){
				line(2, y, 80, y, '#fff');
				line(1840, y, 1918, y, '#fff');
			});

			var label = function(y, text, side){
				add('text', {x: side == 'left' ? 70 : 1849, y: y + 7, 'class': 'axis axis--' + side}, text);
			};
			['5.2000', '5.0000', '4.8000', '4.6000', '4.4000', '4.2000', '4.0000'].forEach(function(t, i){
				var y = Math.round(175 + i * 59.7);
				line(73, y + .5, 80, y + .5, '#fff');
				line(1841, y + .5, 1847, y + .5, '#fff');
				label(y, t, 'left');
				label(y, t, 'right');
			});
			for (i = 0; i < 8; i++) line(73, 596.5 + i * 21, 80, 596.5 + i * 21, '#fff');
			[[617, '6.00'], [659, '2.00'], [701, '-2.00'], [743, '-6.00']].forEach(function(r){
				line(1841, r[0] + .5, 1847, r[0] + .5, '#fff');
				label(r[0], r[1], 'left');
				label(r[0], r[1], 'right');
			});
			[790, 804, 818, 832, 846, 861, 932, 946, 960, 975].forEach(function(y){ line(73, y + .5, 80, y + .5, '#fff'); });
			[[790, '0.3000'], [832, '0.1500'], [918, '-0.15...'], [961, '-0.30...']].forEach(function(r){ label(r[0], r[1], 'left'); });
			[[801, '150.00'], [855, '50.00'], [881, ''], [908, '-50.00'], [962, '-150.00']].forEach(function(r){
				line(1841, r[0] + .5, 1847, r[0] + .5, '#fff');
				label(r[0], r[1], 'right');
			});

			// value flags, later ones lie on top
			[
				[201, '5.1180', '#00f'], [222, '5.0480', '#66f'], [189, '5.1610', '#ff0'], [171, '5.2190', '#f00'], [383, '4.5090', '#f00'],
				[598, '8.00', '#f00'], [640, '4.00', '#6b6b00'], [682, '0.00', '#00f'], [724, '-4.00', '#6b6b00'], [709, '-2.55', '#0ff'], [766, '-8.00', '#f00'],
				[819, '120.00', '#808080'], [948, '-120.00', '#808080'], [931, '-89.69', '#a6a6a6']
			].forEach(function(f){
				add('rect', {x: 1841, y: f[0] - 11, width: 77, height: 23, fill: f[2]});
				add('text', {x: 1849, y: f[0] + 7, 'class': 'axis axis--flag'}, f[1]);
			});
			[[877, '0.0000', '#808'], [888, '-0.0397', '#00f'], [908, '-0.1081', '#f00']].forEach(function(f){
				add('rect', {x: 2, y: f[0] - 11, width: 78, height: 23, fill: f[2]});
				add('text', {x: 71, y: f[0] + 8, 'class': 'axis axis--left axis--flag'}, f[1]);
			});

			// dates
			line(102.5, 991, 102.5, 995, '#fff');
			line(107.5, 991, 107.5, 1001, '#fff');
			add('text', {x: 133, y: 1014, 'class': 'axis axis--date'}, '7/25');
			['7/29', '8/05', '8/11', '8/19', '8/26', '9/01', '9/08', '9/15', '9/21', '9/28', '10/05', '10/11', '10/18', '10/25', '10/31', '11/07', '11/14', '11/18', '11/25', '12/02', '12/08', '12/15', '12/22', '17:30'].forEach(function(t, i){
				var x = 172.5 + i * 70;
				line(x, 991, x, 995, '#fff');
				add('text', {x: x + 26, y: 1014, 'class': 'axis axis--date'}, t);
			});

			// workbook tabs
			var names = ['UCG cicli', 'UCG TF240', 'ENI cicli', 'ENI TF240', 'FIAT cicli', 'FIAT TF240', 'GENERALI cicli', 'GENERALI TF240', 'STM', 'STM_TF240', 'TERNA', 'TERNA_TF240', 'ENEL', 'ENEL_TF240', 'INTESA', 'INTESA_TF240', '100 GIORNI Azioni', 'No PREZZI 3'];
			var active = 13;
			var edge = function(d, fill){
				return '<svg class="edge" viewBox="0 0 10 17">' + (fill || '') + '<path d="' + d + '" fill="none" stroke="#000"/></svg>';
			};
			document.querySelector('.tabs').innerHTML = edge('M1 0L7 16H10') + names.map(function(name, i){
				var d = 'M1 0L8 16H10M5 9L2 16H0', fill = '';
				if (i == active) {
					d = 'M9 0L2 16H0M6 9L9 16H10';
					fill = '<path d="M0 0H9L2 16H0Z" fill="#fff"/>';
				}
				if (i == active - 1) fill = '<path d="M1 0H10V16H8Z" fill="#fff"/>';
				if (i == names.length - 1) d = 'M9 0L2 16H0';
				return '<button class="tab' + (i == active ? ' tab--active' : '') + '">' + name + '</button>' + edge(d, fill);
			}).join('');
		</script>
	</body>
</html>
```
FILE: styles.css
```css
* {
	box-sizing: border-box;
}
body {
	margin: 0;
	height: 100vh;
	display: flex;
	flex-direction: column;
	overflow: hidden;
	background-color: #f0f0f0;
	font-family: "Open Sans", "Noto Sans", sans-serif;
	font-size: 14px;
	color: #111;
}
button {
	display: flex;
	align-items: center;
	justify-content: center;
	padding: 0;
	border: 0;
	background: none;
	font: inherit;
	color: inherit;
}

/* title bar */
.titlebar {
	display: flex;
	align-items: center;
	height: 29px;
	padding-left: 1px;
	border-bottom: 1px solid #333;
	background:
		linear-gradient(to bottom, rgba(40,70,110,.35) 0, rgba(255,255,255,.35) 40%, rgba(255,255,255,.2) 70%, rgba(60,90,130,.35) 100%) 0 0 / 22% 100% no-repeat,
		linear-gradient(to right, #9db5d2 0, #b5c6da 12%, #a9c0da 20%, #b5d5f6 24%, #bcdcfd 50%, #a8c8ec 66%, #bcdcfd 74%, #b0d0f5 78%, #1f4068 79%, #16365c 86%, #244a78 100%);
}
.logo {
	width: 18px;
	height: 22px;
	margin-right: 7px;
}
.title {
	margin: 0;
	font-size: 14px;
	font-weight: normal;
	white-space: nowrap;
}
.ghost {
	width: 150px;
	height: 14px;
	margin-left: 16px;
	background-color: rgba(80,110,145,.4);
	border-radius: 7px;
	filter: blur(5px);
}
.win_buttons {
	display: flex;
	align-self: flex-start;
	height: 25px;
	margin-left: auto;
	margin-right: 2px;
	border: 1px solid #d5dfea;
	border-top: 0;
	border-radius: 0 0 5px 5px;
	overflow: hidden;
}
.win {
	width: 37px;
	border-right: 1px solid #c5d0dd;
	background: linear-gradient(to bottom, #a9b8c9 0, #8798ab 48%, #3c536f 52%, #7189a5 100%);
}
.win--close {
	width: 63px;
	border-right: 0;
	background: linear-gradient(to bottom, #dfa294 0, #cd7463 48%, #b02a14 52%, #d8724f 100%);
}

/* menu */
.menubar {
	display: flex;
	align-items: center;
	gap: 15px;
	height: 29px;
	padding-left: 7px;
	border-bottom: 1px solid #999;
	background: linear-gradient(to bottom, #fff 0, #f4f6fb 30%, #d4daec 36%, #e2e7f5 100%);
}
.menubar a {
	color: #111;
	text-decoration: none;
}
.menu_icon {
	width: 18px;
	height: 17px;
	margin-right: -6px;
	shape-rendering: crispEdges;
}
.mdi {
	display: flex;
	gap: 2px;
	margin-left: auto;
	margin-right: 1px;
}
.mdi button {
	width: 22px;
	height: 26px;
	border: 1px solid #a3b5cb;
	background: linear-gradient(to bottom, #eef5fd 0, #d5e5f7 100%);
}
.mdi svg {
	width: 10px;
	height: 10px;
}
.mdi--float {
	position: absolute;
	top: 7px;
	right: -11px;
}

/* toolbars */
.toolbar {
	display: grid;
	grid-template-columns: 576px 617px 1fr;
	height: 32px;
	padding-left: 7px;
	border-top: 1px solid #fff;
	border-bottom: 2px solid #808080;
}
.tools {
	display: flex;
	align-items: center;
}
.tools button {
	width: 23px;
	height: 24px;
	flex-shrink: 0;
}
.tools svg {
	width: 16px;
	height: 16px;
	shape-rendering: crispEdges;
}
.tools svg.smooth {
	shape-rendering: auto;
}
.tools svg.raised {
	box-shadow: 1px 1px 0 #aaa;
}
.grip {
	width: 3px;
	height: 26px;
	margin-right: 4px;
	background: repeating-linear-gradient(to bottom, #aaa 0, #aaa 2px, transparent 2px, transparent 4px);
}
.sep {
	width: 2px;
	height: 22px;
	margin: 0 3px;
	border-left: 1px solid #999;
	border-right: 1px solid #fff;
}
.tools .pressed {
	border: 1px solid #999;
	border-right-color: #fff;
	border-bottom-color: #fff;
	background-color: #f8f8f8;
}
.symbol {
	width: 136px;
	height: 23px;
	margin-left: 2px;
	border: 0;
	appearance: none;
	background:
		linear-gradient(to bottom right, #000 50%, transparent 50%) 126px 9px / 5px 5px no-repeat,
		linear-gradient(to bottom left, #000 50%, transparent 50%) 121px 9px / 5px 5px no-repeat,
		#fff;
}
.tools .go {
	width: 18px;
	margin-right: 7px;
}
.tools .abc {
	font-family: "Liberation Sans", sans-serif;
	font-size: 11px;
}

/* chart */
.chart {
	position: relative;
	flex: 1;
	min-height: 0;
	display: grid;
	overflow: hidden;
	background-color: #000;
	border-left: 2px solid #888;
	border-right: 2px solid #ccc;
	font-family: "Liberation Sans", Arial, sans-serif;
}
.plot, .panes {
	grid-area: 1 / 1;
	min-height: 0;
}
.plot {
	width: calc(100% + 4px);
	height: 100%;
	margin-left: -2px;
	shape-rendering: crispEdges;
}
.axis {
	font-size: 20px;
	fill: #fff;
}
.axis--left {
	text-anchor: end;
}
.axis--date, .mark {
	text-anchor: middle;
}
.axis--flag {
	fill: #000;
}
.mark {
	font-size: 17px;
	fill: #fff;
}
.panes {
	display: grid;
	grid-template-rows: 468fr 216fr 244fr;
}
.legend {
	display: flex;
	align-items: flex-start;
	gap: 10px;
	padding-left: 80px;
	font-size: 16px;
	line-height: 20px;
	color: #fff;
	white-space: nowrap;
}
.before-s {
	margin-left: 7px;
}
.before-m {
	margin-left: 10px;
}
.before-l {
	margin-left: 18px;
}
.before-xl {
	margin-left: 30px;
}
.before-xxl {
	margin-left: 40px;
}
.quote { color: #6a6aff; }
.up { color: #0f0; }
.cyan { color: #0ff; }
.red { color: #f00; }
.blue { color: #00f; }
.purple { color: #808; }
.olive { color: #707000; }
.silver { color: #a6a6a6; }
.gray { color: #808080; }
.dark { color: #404040; }
.orange { color: #c60; }

/* horizontal scroll */
.scrollbar {
	display: flex;
	align-items: center;
	height: 23px;
	padding: 0 9px 0 7px;
	background-color: #ededed;
	border-left: 2px solid #888;
}
.scrollbar svg {
	width: 6px;
	height: 10px;
}
.scrollbar .thumb {
	width: 18px;
	height: 18px;
	margin-left: auto;
	margin-right: 10px;
	border: 1px solid #999;
	border-radius: 2px;
	background: linear-gradient(to right, #f5f5f5, #d0d0d0);
}
.scrollbar .thumb svg {
	width: 10px;
}

/* workbook tabs */
.tabbar {
	display: flex;
	height: 18px;
	border-top: 1px solid #000;
	font-family: "Liberation Sans", Arial, sans-serif;
	font-size: 12px;
}
.step {
	width: 17px;
	height: 17px;
	border: 1px solid #fff;
	border-right-color: #777;
	border-bottom-color: #777;
}
.step svg {
	width: 10px;
	height: 10px;
	fill: #666;
}
.tabs {
	display: flex;
	margin-left: -2px;
}
.tab {
	height: 17px;
	padding: 0 6px;
	border-bottom: 1px solid #000;
	white-space: nowrap;
}
.tab--active {
	background-color: #fff;
	font-weight: bold;
}
.edge {
	width: 10px;
	height: 17px;
}

/* status */
.status {
	display: flex;
	align-items: center;
	height: 21px;
	border-top: 1px solid #999;
	border-bottom: 1px solid #5a6a80;
	background-color: #f1eded;
	white-space: nowrap;
}
.help {
	margin-left: 2px;
	margin-right: auto;
}
.cell {
	padding: 0 15px 0 4px;
	border-left: 1px solid #ccc;
}
.cell--on {
	padding-right: 3px;
	color: #178017;
}
.cell--clock {
	padding-right: 4px;
}
.lamp {
	width: 14px;
	height: 14px;
	margin: 0 6px 4px;
}
```
